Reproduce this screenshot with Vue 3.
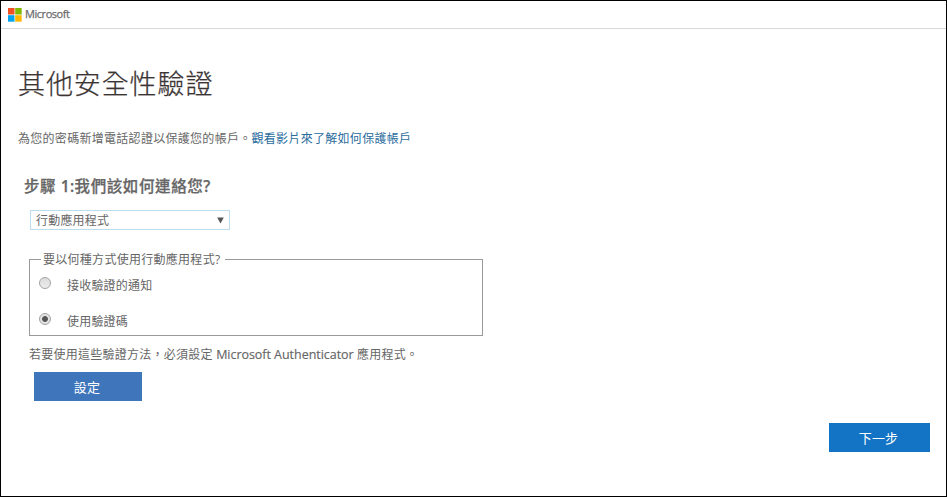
<script setup>
import { ref } from 'vue'

const method = ref('code')
const options = [
  { value: 'notify', label: '接收驗證的通知' },
  { value: 'code', label: '使用驗證碼' }
]
</script>

<template>
  <div class="page">
    <header class="header">
      <svg class="logo" width="14" height="14" viewBox="0 0 14 14" aria-hidden="true">
        <rect x="0" y="0" width="6.5" height="6.5" fill="#f25022" />
        <rect x="7.2" y="0" width="6.5" height="6.5" fill="#7fba00" />
        <rect x="0" y="7.2" width="6.5" height="6.5" fill="#00a4ef" />
        <rect x="7.2" y="7.2" width="6.5" height="6.5" fill="#ffb900" />
      </svg>
      <span class="brand">Microsoft</span>
    </header>
    <main class="content">
      <h1 class="title">其他安全性驗證</h1>
      <p class="intro">為您的密碼新增電話認證以保護您的帳戶。<a class="link">觀看影片來了解如何保護帳戶</a></p>
      <h2 class="step">步驟 <span class="number">1:</span>我們該如何連絡您<span class="number">?</span></h2>
      <div class="select">
        <span>行動應用程式</span>
        <svg width="7" height="7" viewBox="0 0 7 7" aria-hidden="true"><path d="M0.2 0.5H6.8L3.5 6.5Z" fill="#555" /></svg>
      </div>
      <fieldset class="group">
        <legend class="legend">要以何種方式使用行動應用程式?</legend>
        <label v-for="o in options" :key="o.value" class="option">
          <input v-model="method" class="radio" type="radio" name="method" :value="o.value" />
          <span>{{ o.label }}</span>
        </label>
      </fieldset>
      <p class="note">若要使用這些驗證方法，必須設定 <span class="latin">Microsoft Authenticator</span> 應用程式。</p>
      <button class="setup">設定</button>
      <button class="next">下一步</button>
    </main>
  </div>
</template>

<style>
body {
  margin: 0;
  background: #fff;
}
</style>

<style scoped>
.page {
  box-sizing: border-box;
  width: 947px;
  height: 497px;
  border: 1px solid #000;
  background: #fff;
  color: #666;
  font-family: "Open Sans", "Noto Sans CJK TC", sans-serif;
  font-size: 12px;
  letter-spacing: 0.2px;
  overflow: hidden;
}
.header {
  display: flex;
  align-items: center;
  box-sizing: border-box;
  height: 28px;
  padding-left: 7px;
  border-bottom: 1px solid #d9d9d9;
}
.brand {
  margin: -2px 0 0 3px;
  color: #6b6b6b;
  font-size: 11px;
  letter-spacing: -0.45px;
  -webkit-text-stroke: 0.25px #6b6b6b;
}
.content {
  display: flex;
  flex-direction: column;
  align-items: flex-start;
  padding: 35px 16px 0 17px;
}
.title {
  margin: 0;
  color: #3b3433;
  font-size: 27px;
  font-weight: 300;
  letter-spacing: 0.9px;
  line-height: 40px;
  -webkit-text-stroke: 0.25px #3b3433;
}
.intro {
  margin: 25px 0 0;
  line-height: 20px;
  letter-spacing: 0.29px;
}
.link {
  color: #2a6c9c;
}
.step {
  margin: 26px 0 0 6px;
  font-size: 15.5px;
  font-weight: 500;
  letter-spacing: 0.6px;
  line-height: 22px;
  -webkit-text-stroke: 0.25px #666;
}
.number {
  font-weight: 600;
  letter-spacing: 0.3px;
}
.select {
  display: flex;
  align-items: center;
  justify-content: space-between;
  box-sizing: border-box;
  width: 200px;
  height: 20px;
  margin: 13px 0 0 12px;
  padding: 0 5px 0 5px;
  border: 1px solid #bcdcf0;
}
.group {
  box-sizing: border-box;
  width: 454px;
  height: 85px;
  margin: 21px 0 0 11px;
  padding: 7px 0 0 9px;
  border: 1px solid #999;
}
.legend {
  margin-left: 2px;
  padding: 0 5px 0 2px;
  line-height: 17px;
  letter-spacing: 0.28px;
}
.option {
  display: flex;
  align-items: flex-start;
  height: 36px;
  line-height: 22px;
}
.radio {
  appearance: none;
  box-sizing: border-box;
  flex: none;
  width: 12px;
  height: 12px;
  margin: 2px 16px 0 0;
  border: 1px solid #a3a3a3;
  border-radius: 50%;
  background: linear-gradient(#dcdcdc, #ececec);
}
.radio:checked {
  background: radial-gradient(circle, #555 0 2.5px, #e4e4e4 3.3px);
}
.note {
  margin: 9px 0 0 11px;
  line-height: 20px;
  letter-spacing: 0.25px;
}
.latin {
  font-size: 12.5px;
  letter-spacing: -0.04px;
  -webkit-text-stroke: 0.15px #666;
}
.setup,
.next {
  height: 29px;
  padding: 0 2px 1px 0;
  border: 0;
  color: #fff;
  font-family: inherit;
  font-size: 13px;
  letter-spacing: 0.2px;
}
.setup {
  width: 108px;
  margin: 7px 0 0 16px;
  background: #3f76bb;
}
.next {
  align-self: flex-end;
  width: 101px;
  margin-top: 22px;
  background: #1373c4;
}
</style>
